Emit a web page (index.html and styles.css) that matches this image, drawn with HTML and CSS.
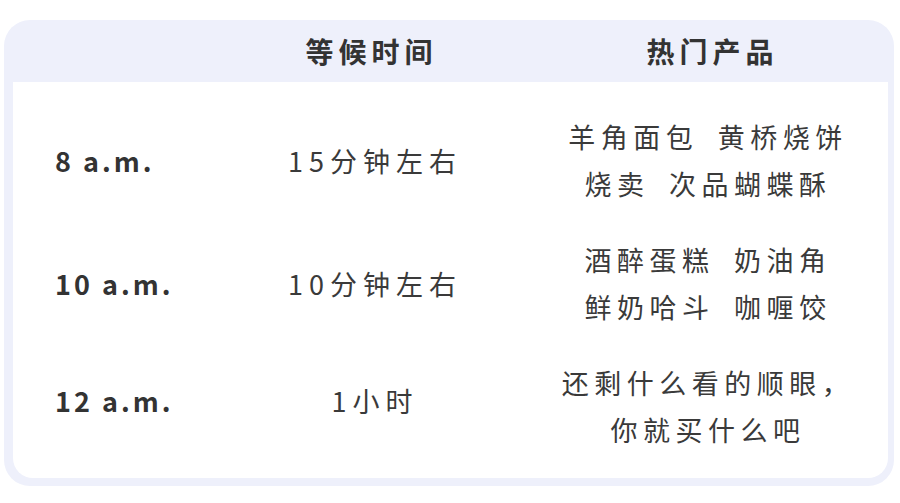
FILE: index.html
```html
<!DOCTYPE html>
<html lang="zh">
<head>
<meta charset="utf-8">
<link rel="stylesheet" href="styles.css">
</head>
<body>
<div class="card">
  <div class="head">
    <div></div>
    <div class="h h1">等候时间</div>
    <div class="h h2">热门产品</div>
  </div>
  <div class="panel">
    <div class="row r1">
      <div class="label">8 a.m.</div>
      <div class="wait">15分钟左右</div>
      <div class="prod">羊角面包 黄桥烧饼<br>烧卖 次品蝴蝶酥</div>
    </div>
    <div class="row r2">
      <div class="label">10 a.m.</div>
      <div class="wait">10分钟左右</div>
      <div class="prod">酒醉蛋糕 奶油角<br>鲜奶哈斗 咖喱饺</div>
    </div>
    <div class="row r3">
      <div class="label">12 a.m.</div>
      <div class="wait">1小时</div>
      <div class="prod last">还剩什么看的顺眼，<br>你就买什么吧</div>
    </div>
  </div>
</div>
</body>
</html>
```

FILE: styles.css
```css
html, body {
  margin: 0;
  padding: 0;
  background: #ffffff;
}
body {
  font-family: "Noto Sans CJK SC", "Noto Sans", sans-serif;
  color: #333333;
  padding: 20px 6px 17px 4px;
}
.card {
  width: 890px;
  height: 466px;
  box-sizing: border-box;
  background: #eef0fb;
  border-radius: 26px;
  padding: 0 6px 8px 9px;
  display: flex;
  flex-direction: column;
}
.head, .row {
  display: grid;
  grid-template-columns: 189px 340px 336px 1fr;
  align-items: center;
}
.head {
  height: 62px;
  flex: none;
}
.h {
  text-align: center;
  font-size: 28px;
  font-weight: 700;
  letter-spacing: 5px;
  color: #333;
}
.h1 { padding-right: 1px; }
.h2 { padding-left: 5px; }
.panel {
  flex: 1;
  background: #ffffff;
  border-radius: 0 0 20px 20px;
  padding-top: 17px;
}
.r1 { height: 122px; }
.r2 { height: 124px; }
.r3 { height: 110px; }
.label {
  padding-left: 42px;
  font-size: 27px;
  font-weight: 700;
  letter-spacing: 3px;
  color: #333;
}
.wait {
  text-align: center;
  font-size: 27px;
  letter-spacing: 6px;
  padding-left: 6px;
  color: #3a3a3a;
}
.prod {
  text-align: center;
  font-size: 27px;
  line-height: 47px;
  letter-spacing: 5.5px;
  word-spacing: 8px;
  padding-right: 4px;
  color: #3a3a3a;
}
.prod.last {
  margin-top: 12px;
}
```
